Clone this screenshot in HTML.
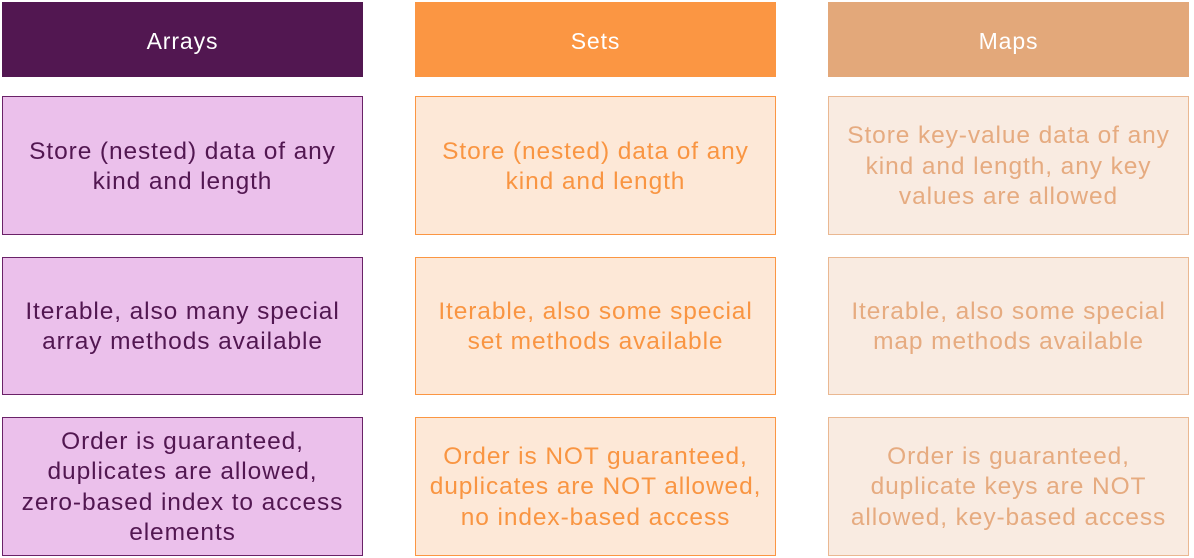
<!DOCTYPE html>
<html><head><style>
body{margin:0;width:1194px;height:558px;background:#fff;font-family:"Liberation Sans",sans-serif;position:relative;overflow:hidden}
.b{position:absolute;box-sizing:border-box;display:flex;align-items:center;justify-content:center;text-align:center;font-size:24.5px;letter-spacing:0.9px;line-height:30.5px;padding:0 4px;white-space:nowrap}
.h{height:75px;top:2px;color:#fff;font-size:23px;padding-top:3px}
.c1{left:2px;width:361px}.c2{left:415px;width:361px}.c3{left:828px;width:361px}
.a{background:#ebc0eb;border:1.5px solid #6a2268;color:#521751}
.s{background:#fde8d7;border:1.5px solid #fb9643;color:#f99542}
.m{background:#f9ebe1;border:1.5px solid #eab892;color:#e6ab80}
.r1{top:96px;height:139px;padding-top:3px}.r2{top:257px;height:138px;padding-top:2px}.r3{top:417px;height:139px;padding-top:2px}
</style></head><body>
<div class="b h c1" style="background:#521751">Arrays</div>
<div class="b h c2" style="background:#fb9643">Sets</div>
<div class="b h c3" style="background:#e3a87a">Maps</div>
<div class="b a c1 r1">Store (nested) data of any<br>kind and length</div>
<div class="b s c2 r1">Store (nested) data of any<br>kind and length</div>
<div class="b m c3 r1">Store key-value data of any<br>kind and length, any key<br>values are allowed</div>
<div class="b a c1 r2">Iterable, also many special<br>array methods available</div>
<div class="b s c2 r2">Iterable, also some special<br>set methods available</div>
<div class="b m c3 r2">Iterable, also some special<br>map methods available</div>
<div class="b a c1 r3">Order is guaranteed,<br>duplicates are allowed,<br>zero-based index to access<br>elements</div>
<div class="b s c2 r3">Order is NOT guaranteed,<br>duplicates are NOT allowed,<br>no index-based access</div>
<div class="b m c3 r3">Order is guaranteed,<br>duplicate keys are NOT<br>allowed, key-based access</div>
</body></html>
